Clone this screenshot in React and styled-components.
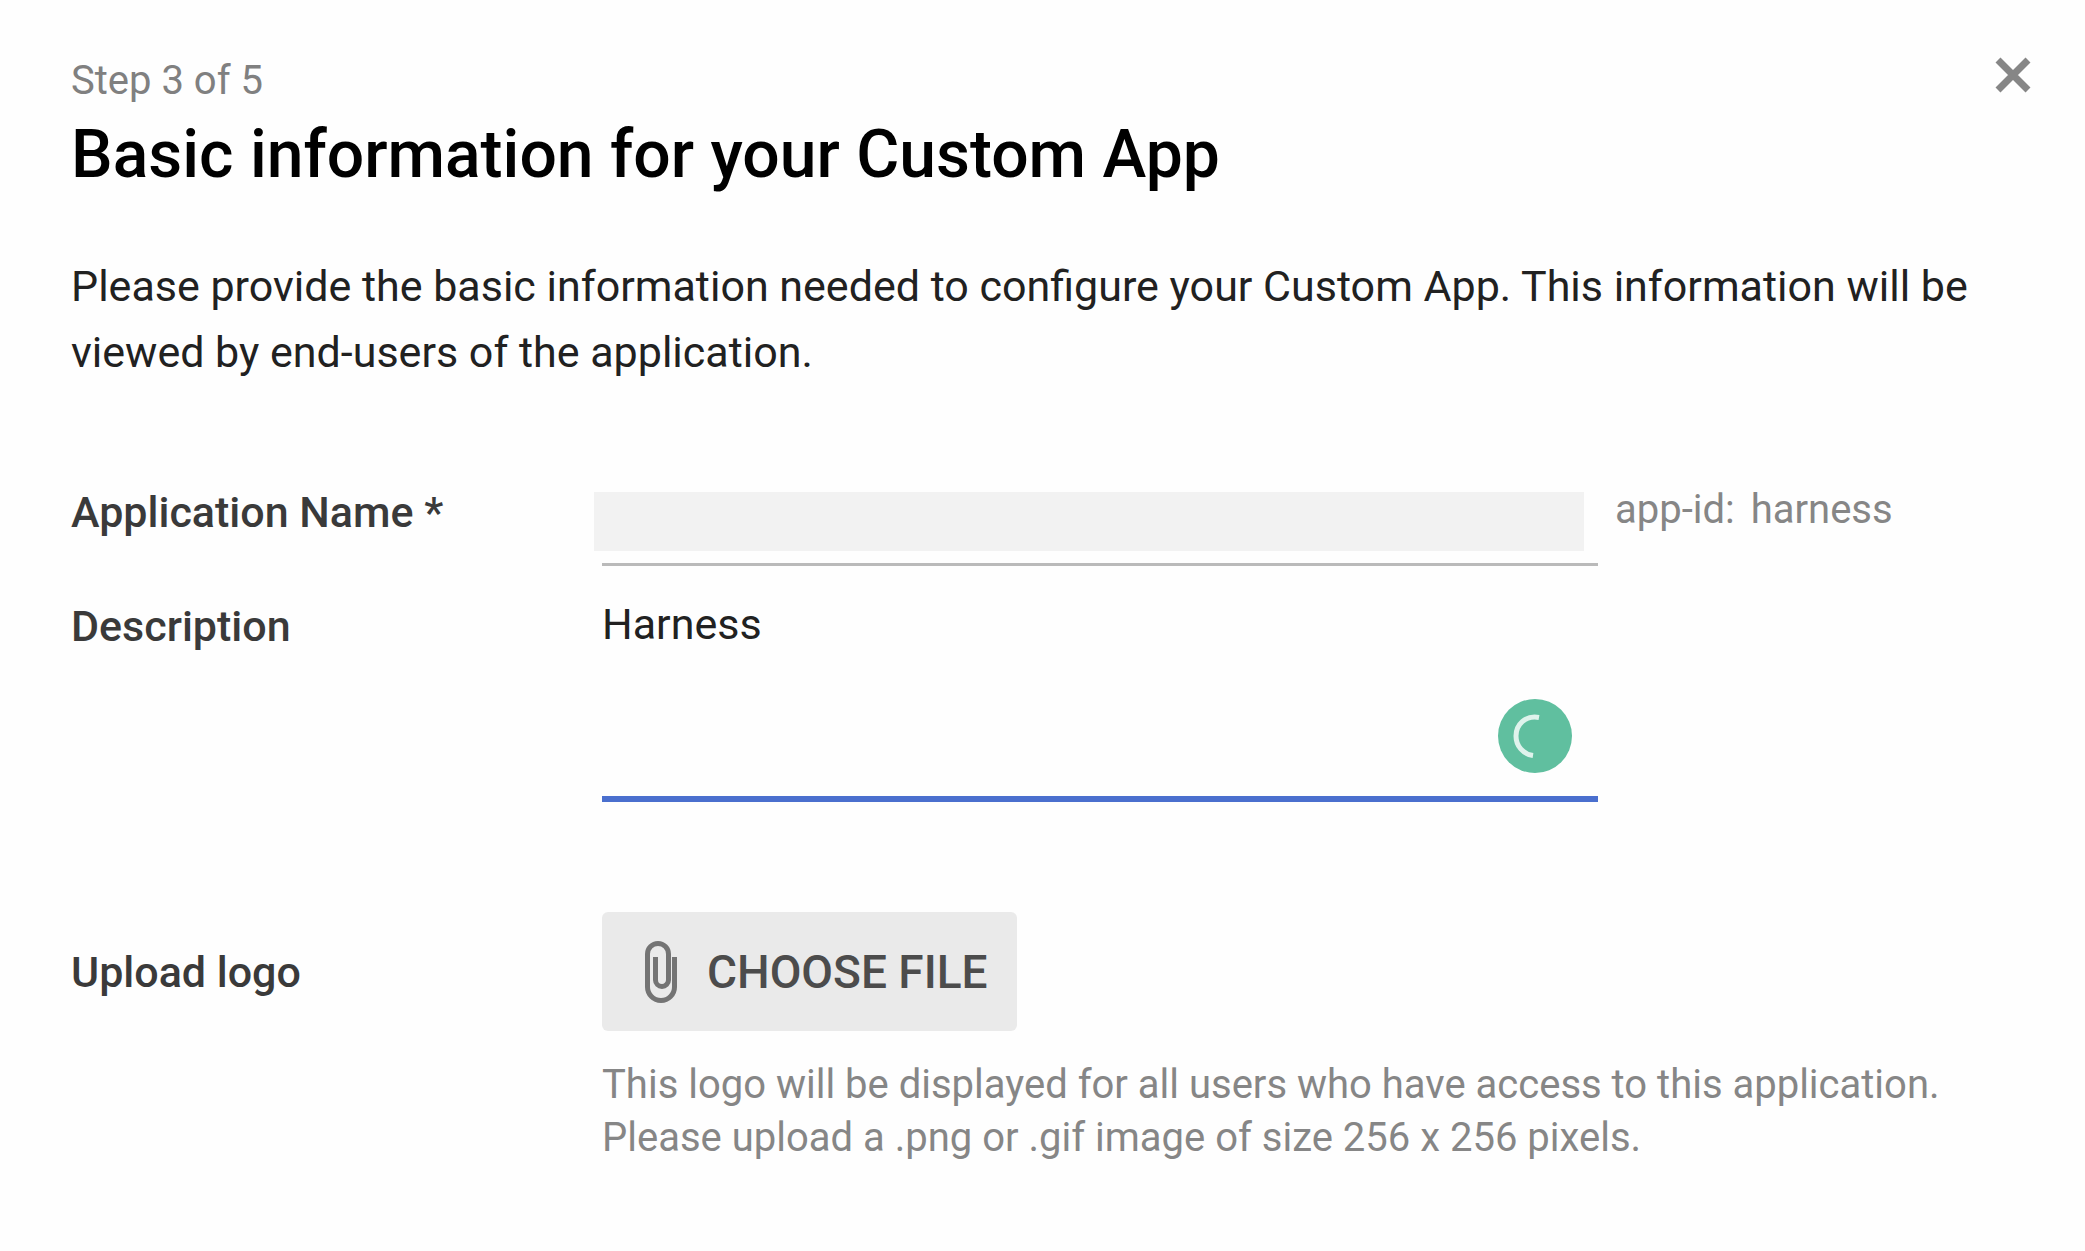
import React from "react";
import styled, { createGlobalStyle } from "styled-components";

const GlobalStyle = createGlobalStyle`
  *, *::before, *::after { box-sizing: border-box; }
  body {
    margin: 0;
    background: #fefefe;
    color: #212121;
    font-family: Roboto, "Liberation Sans", sans-serif;
  }
  button, input, textarea { font: inherit; color: inherit; }
`;

const Dialog = styled.main`
  padding: 57px 71px 64px;
`;

const Header = styled.header`
  display: flex;
  align-items: flex-start;
  justify-content: space-between;
`;

const Step = styled.p`
  margin: 0 0 10px;
  font-size: 40px;
  line-height: 48px;
  color: #808080;
`;

const Title = styled.h1`
  margin: 0;
  font-size: 66px;
  font-weight: 500;
  line-height: 80px;
  color: #000;
`;

const CloseButton = styled.button`
  display: flex;
  margin: -8px -25px 0 0;
  padding: 8px;
  border: 0;
  background: none;
  color: #868686;
  cursor: pointer;
`;

const Intro = styled.p`
  margin: 58px 0 99px;
  font-size: 43px;
  line-height: 66px;
`;

const Form = styled.form`
  display: flex;
  flex-direction: column;
`;

const Row = styled.div`
  display: grid;
  grid-template-columns: 531px minmax(0, 996px) minmax(0, 1fr);
  align-items: start;
  margin-bottom: ${(p) => p.$after || 0}px;
`;

const Label = styled.label`
  padding-top: ${(p) => p.$top || 2}px;
  font-size: 43px;
  font-weight: 500;
  line-height: 52px;
  color: #3a3a3a;
`;

const NameField = styled.div`
  display: flex;
  padding-top: 8px;
  border-bottom: 3px solid #bababa;
`;

const NameInput = styled.input`
  flex: 1;
  min-width: 0;
  height: 59px;
  margin: 0 14px 12px -8px;
  padding: 0 8px;
  border: 0;
  outline: 0;
  background: #f2f2f2;
`;

const AppId = styled.div`
  display: flex;
  gap: 16px;
  padding-left: 17px;
  font-size: 40px;
  line-height: 52px;
  color: #868686;
`;

const DescriptionField = styled.div`
  position: relative;
  display: flex;
`;

const DescriptionInput = styled.textarea`
  flex: 1;
  min-width: 0;
  height: 204px;
  padding: 0;
  border: 0;
  border-bottom: 6px solid #4a6fce;
  outline: 0;
  resize: none;
  background: none;
  font-size: 43px;
  line-height: 52px;
`;

const Badge = styled.svg`
  position: absolute;
  right: 26px;
  bottom: 29px;
`;

const Upload = styled.div`
  grid-column: 2 / 4;
`;

const FileButton = styled.button`
  display: flex;
  align-items: center;
  gap: 30px;
  height: 119px;
  padding: 0 29px 0 43px;
  border: 0;
  border-radius: 6px;
  background: #eaeaea;
  color: #4c4c4c;
  font-size: 46px;
  font-weight: 500;
  line-height: 52px;
  cursor: pointer;
`;

const Hint = styled.p`
  margin: 27px 0 0;
  font-size: 40px;
  line-height: 53px;
  color: #868686;
`;

const CloseIcon = () => (
  <svg width="36" height="36" viewBox="0 0 36 36" aria-hidden="true">
    <path d="M3 3L33 33M33 3L3 33" stroke="currentColor" strokeWidth="7" />
  </svg>
);

const ClipIcon = () => (
  <svg width="32" height="62" viewBox="0 0 32 62" fill="none" aria-hidden="true">
    <path
      d="M29.500 16V46A13.500 13.500 0 0 1 2.500 46V13A10.500 10.500 0 0 1 23.500 13V39A6.500 6.500 0 0 1 10.500 39V16"
      stroke="#747474"
      strokeWidth="5"
    />
  </svg>
);

export default function App() {
  return (
    <>
      <GlobalStyle />
      <Dialog>
        <Header>
          <div>
            <Step>Step 3 of 5</Step>
            <Title>Basic information for your Custom App</Title>
          </div>
          <CloseButton type="button" aria-label="Close">
            <CloseIcon />
          </CloseButton>
        </Header>
        <Intro>
          Please provide the basic information needed to configure your Custom App. This
          information will be viewed by end-users of the application.
        </Intro>
        <Form>
          <Row $after={32}>
            <Label htmlFor="app-name">Application Name *</Label>
            <NameField>
              <NameInput id="app-name" type="text" />
            </NameField>
            <AppId>
              <span>app-id:</span>
              <span>harness</span>
            </AppId>
          </Row>
          <Row $after={110}>
            <Label htmlFor="description">Description</Label>
            <DescriptionField>
              <DescriptionInput id="description" defaultValue="Harness" spellCheck={false} />
              <Badge width="74" height="74" viewBox="0 0 74 74" aria-hidden="true">
                <circle cx="37" cy="37" r="37" fill="#60bf9f" />
                <path
                  d="M41 18.500C27 16 18 26 18 37C18 47 25 55 35 56.500"
                  fill="none"
                  stroke="#dff3ec"
                  strokeWidth="5"
                />
              </Badge>
            </DescriptionField>
          </Row>
          <Row>
            <Label htmlFor="logo" $top={34}>
              Upload logo
            </Label>
            <Upload>
              <FileButton id="logo" type="button">
                <ClipIcon />
                CHOOSE FILE
              </FileButton>
              <Hint>
                This logo will be displayed for all users who have access to this application.
                <br />
                Please upload a .png or .gif image of size 256 x 256 pixels.
              </Hint>
            </Upload>
          </Row>
        </Form>
      </Dialog>
    </>
  );
}
